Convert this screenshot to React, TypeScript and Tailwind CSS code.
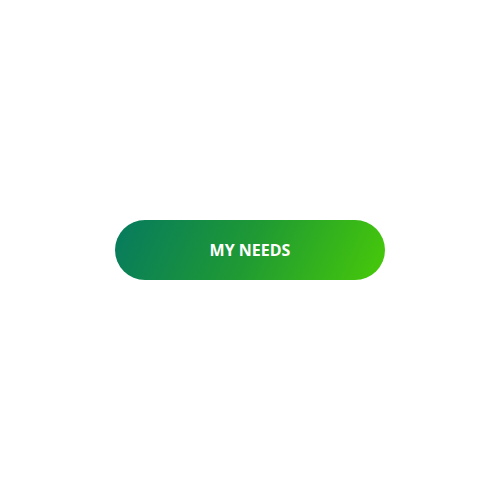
export default function App() {
  return (
    <div className="w-[500px] h-[500px] bg-white flex items-center justify-center">
      <button className="w-[270px] h-[60px] rounded-full bg-[linear-gradient(115deg,#067a5f_0%,#1f9a33_50%,#48ca08_100%)] text-white text-[16px] font-bold font-['Open_Sans',sans-serif]">
        MY NEEDS
      </button>
    </div>
  );
}
